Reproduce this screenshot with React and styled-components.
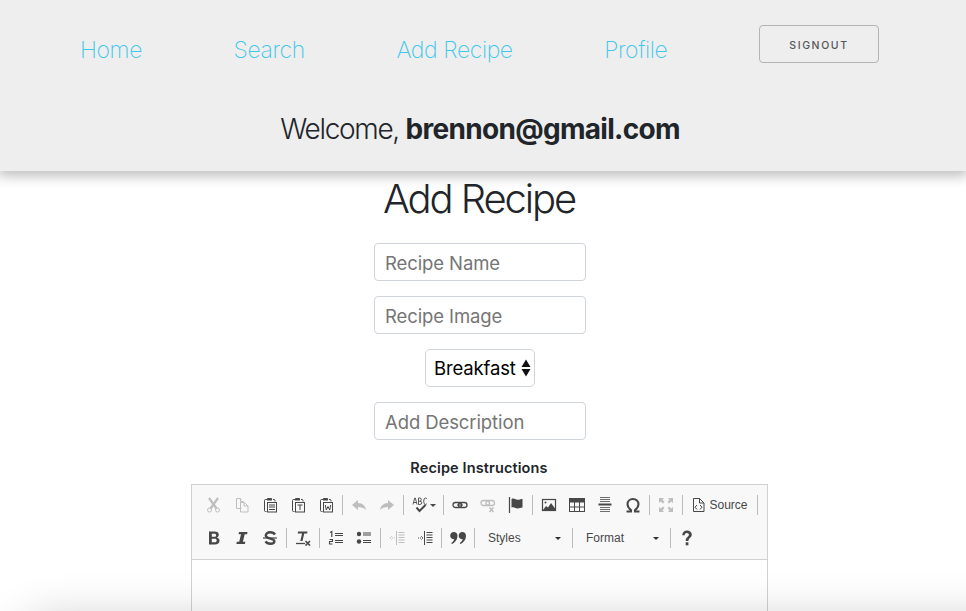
import React from "react";
import styled, { createGlobalStyle } from "styled-components";

const Global = createGlobalStyle`
  html, body { margin: 0; padding: 0; background: #fff; height: 100%; overflow: hidden; }
  body { font-family: Inter, "Liberation Sans", sans-serif; color: #212529; }
  * { box-sizing: border-box; }
`;

const Page = styled.div`
  position: relative;
  width: 966px;
  height: 611px;
  overflow: hidden;
`;
const Header = styled.header`
  position: relative;
  z-index: 2;
  height: 171px;
  background: #eeeeee;
  box-shadow: 0 3px 12px 2px rgba(0, 0, 0, 0.26);
`;
const Nav = styled.nav`
  display: flex;
  align-items: flex-start;
  gap: 91.6px;
  padding: 25px 0 0 80px;
`;
const NavLink = styled.a`
  font-size: 23px;
  font-weight: 200;
  letter-spacing: -0.42px;
  line-height: 50px;
  color: #3fc8ea;
  white-space: nowrap;
  height: 50px;
`;
const SignOut = styled.button`
  width: 120px;
  height: 38px;
  background: transparent;
  border: 1px solid #b4b4b4;
  border-radius: 4px;
  font-family: inherit;
  font-size: 10.5px;
  font-weight: 500;
  letter-spacing: 1.6px;
  color: #555;
  padding: 2px 0 0;
`;
const Welcome = styled.div`
  margin-top: 36px;
  text-align: center;
  font-size: 28px;
  line-height: 36px;
  font-weight: 300;
  letter-spacing: -1.3px;
  padding-right: 6px;
  color: #212529;
  b { font-weight: 700; letter-spacing: -0.7px; }
`;
const Main = styled.main`
  width: 960px;
  display: flex;
  flex-direction: column;
  align-items: center;
`;
const Title = styled.h1`
  margin: 5px 2px 21px 0;
  font-size: 40px;
  line-height: 46px;
  font-weight: 300;
  letter-spacing: -2.1px;
  color: #212529;
`;
const Input = styled.input`
  display: block;
  width: 212px;
  height: 38px;
  margin-bottom: 15px;
  padding: 2px 10px 0;
  background: #fff;
  border: 1px solid #ced4da;
  border-radius: 4px;
  font-family: inherit;
  font-size: 18.5px;
  letter-spacing: -0.1px;
  color: #495057;
  &::placeholder { color: #757575; opacity: 1; }
`;
const SelectWrap = styled.div`
  position: relative;
  width: 110px;
  height: 38px;
  margin-bottom: 15px;
`;
const Select = styled.select`
  appearance: none;
  width: 100%;
  height: 100%;
  padding: 0 0 0 8px;
  background: #fff;
  border: 1px solid #ced4da;
  border-radius: 5px;
  font-family: inherit;
  font-size: 18.5px;
  letter-spacing: -0.15px;
  color: #000;
`;
const SelectArrows = styled.svg`
  position: absolute;
  top: 10px;
  right: 4px;
  width: 10px;
  height: 18px;
  pointer-events: none;
`;
const Label = styled.label`
  margin-top: 4px;
  margin-bottom: 8px;
  margin-right: 2px;
  font-size: 14.5px;
  line-height: 17px;
  font-weight: 600;
  letter-spacing: 0.12px;
  color: #212529;
`;
const Editor = styled.div`
  width: 577px;
  height: 200px;
  flex: none;
  margin-right: 1px;
  border: 1px solid #d1d1d1;
  background: #fff;
`;
const Toolbar = styled.div`
  height: 75px;
  padding: 6px 0 0 8px;
  background: #f8f8f8;
  border-bottom: 1px solid #d1d1d1;
  display: flex;
  flex-direction: column;
  gap: 5px;
  font-family: "Liberation Sans", Arial, sans-serif;
`;
const Row = styled.div`
  display: flex;
  align-items: center;
  height: 28px;
`;
const Btn = styled.span`
  flex: none;
  width: ${(p) => p.$w || 28}px;
  height: 28px;
  display: flex;
  align-items: center;
  justify-content: center;
  gap: 4px;
  color: #474747;
  opacity: ${(p) => (p.$off ? 0.32 : 1)};
  font-size: 12px;
  svg { display: block; flex: none; }
`;
const Sep = styled.span`
  flex: none;
  width: 1px;
  height: 20px;
  margin: 0 2px;
  background: #bcbcbc;
`;
const Combo = styled.span`
  flex: none;
  width: 93px;
  height: 28px;
  padding: 0 9px 0 11px;
  display: flex;
  align-items: center;
  justify-content: space-between;
  font-size: 12px;
  color: #484848;
`;
const Caret = styled.i`
  width: 0;
  height: 0;
  border-left: 3px solid transparent;
  border-right: 3px solid transparent;
  border-top: 3px solid #2f2f2f;
`;
const BottomShadow = styled.div`
  position: absolute;
  z-index: 3;
  left: 40px;
  right: -60px;
  top: 632px;
  height: 60px;
  box-shadow: 0 0 48px 10px rgba(0, 0, 0, 0.24);
`;

const I = ({ children, w = 16, h = 16 }) => (
  <svg width={w} height={h} viewBox={`0 0 ${w} ${h}`} fill="none" stroke="currentColor" strokeWidth="1">
    {children}
  </svg>
);
const clip = (
  <>
    <path d="M5.5 2.5H3.5q-1 0-1 1v10q0 1 1 1h1" />
    <path d="M5 3.5V2q0-1 1-1h3q1 0 1 1v1.5z" fill="currentColor" stroke="none" />
    <path d="M11 2.5h1q1 0 1 1v1" />
    <rect x="5.5" y="5.5" width="9" height="9.5" />
  </>
);
const icons = {
  cut: <I><circle cx="3.5" cy="13" r="2" /><circle cx="11.5" cy="13" r="2" /><path d="M4.5 11.5 12 1M10.5 11.5 3 1" strokeWidth="2.2" /></I>,
  copy: <I><path d="M7.5 11.5h-5v-10h4l1 1M6.5 1.5v3h3" /><path d="M6.5 5.5h4l3.5 3.5v6H6.5z" /><path d="M10 5.5V9h4" /></I>,
  paste: <I>{clip}<path d="M7 8h6M7 10h6M7 12.5h6" /></I>,
  pasteT: <I>{clip}<path d="M7.5 8h5M10 8v5" /></I>,
  pasteW: <I>{clip}<path d="M7.3 8l1 5 1.7-3.5 1.7 3.5 1-5" /></I>,
  undo: <I><path d="M7 3 1 8l6 5V10c3 0 6 .8 8 3-.5-4-3.5-7-8-7z" fill="currentColor" stroke="none" /></I>,
  redo: <I><path d="M9 3l6 5-6 5V10c-3 0-6 .8-8 3 .5-4 3.5-7 8-7z" fill="currentColor" stroke="none" /></I>,
  link: <I><rect x="1" y="5.500" width="8.500" height="5" rx="2.500" strokeWidth="1.300" /><rect x="6.500" y="5.500" width="8.500" height="5" rx="2.500" strokeWidth="1.300" /><path d="M5 8h6" strokeWidth="1" /></I>,
  unlink: <I><rect x="1" y="3.500" width="8.500" height="5" rx="2.500" strokeWidth="1.300" /><rect x="6" y="3.500" width="8.500" height="5" rx="2.500" strokeWidth="1.300" /><path d="M9.500 10.500l4 4.500m0-4.500l-4 4.500" strokeWidth="1.500" /></I>,
  anchor: <I><path d="M1.500 0v16" strokeWidth="1.200" /><path d="M3.500 2c3-1.500 4 .8 6 .8 2 0 3-.8 5-.8v8.500c-2 0-3 1-5 1s-3-2-6-1z" fill="currentColor" stroke="none" /></I>,
  image: <I><rect x="1.500" y="2.500" width="13" height="11" strokeWidth="1.200" /><circle cx="4.500" cy="5.500" r="1" fill="currentColor" stroke="none" /><path d="M2 13l3-4 2 1.500L10 6l4.500 6v1.500H2z" fill="currentColor" stroke="none" /></I>,
  table: <I><rect x="0.500" y="1.500" width="15" height="13" /><path d="M0 2h16v3.500H0z" fill="currentColor" stroke="none" /><path d="M0 10h16M5.500 5v10M10.500 5v10" /></I>,
  hr: <I><path d="M3 0.500h10M3 2.500h10M3 4.500h10M3 10.500h10M3 12.500h10M3 14.500h10" strokeWidth="0.800" /><path d="M1.500 7.500h13" strokeWidth="2" /></I>,
  omega: <I><path d="M1.500 14.500h4.500V13C3.800 11.500 2.500 9.500 2.500 7.300 2.500 4 4.800 2 8 2s5.500 2 5.500 5.300c0 2.200-1.300 4.200-3.500 5.700v1.500h4.500" strokeWidth="2.100" /></I>,
  max: <I><path d="M1 1h5L4.500 2.800 6.500 5 5 6.500 2.800 4.500 1 6zM15 1v5l-1.800-1.500L11 6.500 9.500 5l2-2.200L10 1zM1 15v-5l1.800 1.500L5 9.500 6.500 11l-2 2.200L6 15zM15 15h-5l1.500-1.800L9.500 11 11 9.500l2.200 2L15 10z" fill="currentColor" stroke="none" /></I>,
  source: <I w={13} h={16}><path d="M1.500 1.500h6l4.500 4.500v8.500H1.500zM7.500 1.500V6H12" /><path d="M5 8l-2 2.200L5 12.500M8 8l2 2.200-2 2.300" /></I>,
  bold: <I><path d="M3 1.500h5.500c2.700 0 4.300 1.200 4.300 3.200 0 1.300-.7 2.300-2 2.800 1.700.4 2.700 1.600 2.700 3.200 0 2.300-1.800 3.800-4.700 3.800H3zM5.800 3.700v3h2.500c1.200 0 1.800-.5 1.800-1.500S9.500 3.700 8.300 3.700zm0 5.100v3.500h2.800c1.400 0 2.100-.6 2.100-1.800S10 8.800 8.700 8.800z" fill="currentColor" stroke="none" /></I>,
  italic: <I><path d="M5 2h8.500l-.4 2.200H10.700l-1.800 7.600h2.400l-.4 2.200H2.400l.4-2.200h2.400l1.800-7.600H4.600z" fill="currentColor" stroke="none" /></I>,
  strike: <I><path d="M13 4.500C12 3 10.500 2.300 8.300 2.300 5.600 2.300 3.800 3.500 3.800 5.400c0 3.800 8.600 2.500 8.600 5.800 0 1.500-1.600 2.500-4 2.500-2.300 0-4-.9-4.900-2.400" strokeWidth="2.400" /><path d="M1 8h14" strokeWidth="1.200" /></I>,
  clear: <I><path d="M3 1.500h9.500l-.3 2H9.300L7.500 11H5.300l1.800-7.500H2.700z" fill="currentColor" stroke="none" /><path d="M1 13.500h9" strokeWidth="1.300" /><path d="M10.500 11l4.500 4.500m0-4.500l-4.500 4.500" strokeWidth="1.600" /></I>,
  ol: <I><path d="M7 3.500h8M7 5.500h8M7 10.500h8M7 12.500h8" strokeWidth="1" /><path d="M2 2.500l1.800-1v5.500" strokeWidth="1.200" /><path d="M1.500 9.500h3v2h-3v2.500h3" strokeWidth="1.100" /></I>,
  ul: <I><circle cx="3" cy="4" r="2.200" fill="currentColor" stroke="none" /><circle cx="3" cy="11.500" r="2.200" fill="currentColor" stroke="none" /><path d="M7 3h8M7 5h8M7 10.500h8M7 12.500h8" /></I>,
  outdent: <I><path d="M7.500 1v14" /><path d="M9.500 2.500h6M9.500 5h6M9.500 7.500h6M9.500 10h6M9.500 12.500h6" /><path d="M1 8h5M3 6l-2 2 2 2" strokeDasharray="1 1" /></I>,
  indent: <I><path d="M7.500 1v14" /><path d="M9.500 2.500h6M9.500 5h6M9.500 7.500h6M9.500 10h6M9.500 12.500h6" /><path d="M1 8h5M4 6l2 2-2 2" strokeDasharray="1 1" /></I>,
  quote: <I><path d="M3.800 2c2.300 0 3.700 1.600 3.700 3.700 0 3.700-2.500 7-5.600 8.300l-.7-1c1.500-.9 2.800-2.300 3-3.800C2 9.300 0.200 7.800 0.200 5.700 0.200 3.600 1.800 2 3.800 2zM12.300 2c2.300 0 3.700 1.600 3.700 3.700 0 3.700-2.500 7-5.600 8.300l-.7-1c1.500-.9 2.800-2.300 3-3.800-2.200.1-4-1.400-4-3.500C8.700 3.600 10.300 2 12.300 2z" fill="currentColor" stroke="none" /></I>,
  help: <I><path d="M3.200 5.200C3.400 2.300 5.400.6 8 .6c2.900 0 4.800 1.700 4.800 4 0 3.300-3.400 3.500-3.400 6.400H6.700c0-4 3.200-4.100 3.200-6.200 0-1-.8-1.800-2-1.800-1.300 0-2.100.9-2.200 2.200z" fill="currentColor" stroke="none" /><rect x="6.700" y="12.300" width="2.700" height="3" fill="currentColor" stroke="none" /></I>,
};

const Spell = () => (
  <Btn $w={35}>
    <svg width="24" height="16" viewBox="0 0 24 16" fill="none" stroke="currentColor">
      <path d="M1 7.500 2.700 1h.6l1.700 6.500M1.600 5.500h2.800M6.500 1v6.500M6.500 1h1.500q1.300 0 1.300 1.500T8 4.200H6.500M8 4.200q1.700 0 1.700 1.600T8 7.500H6.500M15 2q-.7-1-1.700-1-1.600 0-1.600 3.200t1.600 3.300q1 0 1.700-1" strokeWidth="0.900" />
      <path d="M4.500 10.500l3 3.500 6-6" strokeWidth="2" />
      <path d="M18 7h6l-3 3z" fill="currentColor" stroke="none" />
    </svg>
  </Btn>
);

const Tool = ({ name, off }) => <Btn $off={off}>{icons[name]}</Btn>;

export default function App() {
  return (
    <Page>
      <Global />
      <Header>
        <Nav>
          <NavLink>Home</NavLink>
          <NavLink>Search</NavLink>
          <NavLink>Add Recipe</NavLink>
          <NavLink>Profile</NavLink>
          <SignOut>SIGNOUT</SignOut>
        </Nav>
        <Welcome>
          Welcome, <b>brennon@gmail.com</b>
        </Welcome>
      </Header>
      <Main>
        <Title>Add Recipe</Title>
        <Input placeholder="Recipe Name" />
        <Input placeholder="Recipe Image" />
        <SelectWrap>
          <Select defaultValue="Breakfast">
            <option>Breakfast</option>
            <option>Lunch</option>
            <option>Dinner</option>
          </Select>
          <SelectArrows viewBox="0 0 10 18">
            <path d="M5 0.500 9.500 8H0.500zM0.500 10h9L5 17.500z" fill="#111" />
          </SelectArrows>
        </SelectWrap>
        <Input placeholder="Add Description" />
        <Label>Recipe Instructions</Label>
        <Editor>
          <Toolbar>
            <Row>
              <Tool name="cut" off />
              <Tool name="copy" off />
              <Tool name="paste" />
              <Tool name="pasteT" />
              <Tool name="pasteW" />
              <Sep />
              <Tool name="undo" off />
              <Tool name="redo" off />
              <Sep />
              <Spell />
              <Sep />
              <Tool name="link" />
              <Tool name="unlink" off />
              <Tool name="anchor" />
              <Sep />
              <Tool name="image" />
              <Tool name="table" />
              <Tool name="hr" />
              <Tool name="omega" />
              <Sep />
              <Tool name="max" off />
              <Sep />
              <Btn $w={70}>
                {icons.source}
                <span>Source</span>
              </Btn>
              <Sep />
            </Row>
            <Row>
              <Tool name="bold" />
              <Tool name="italic" />
              <Tool name="strike" />
              <Sep />
              <Tool name="clear" />
              <Sep />
              <Tool name="ol" />
              <Tool name="ul" />
              <Sep />
              <Tool name="outdent" off />
              <Tool name="indent" />
              <Sep />
              <Tool name="quote" />
              <Sep />
              <Combo>Styles<Caret /></Combo>
              <Sep />
              <Combo>Format<Caret /></Combo>
              <Sep />
              <Tool name="help" />
            </Row>
          </Toolbar>
        </Editor>
      </Main>
      <BottomShadow />
    </Page>
  );
}
